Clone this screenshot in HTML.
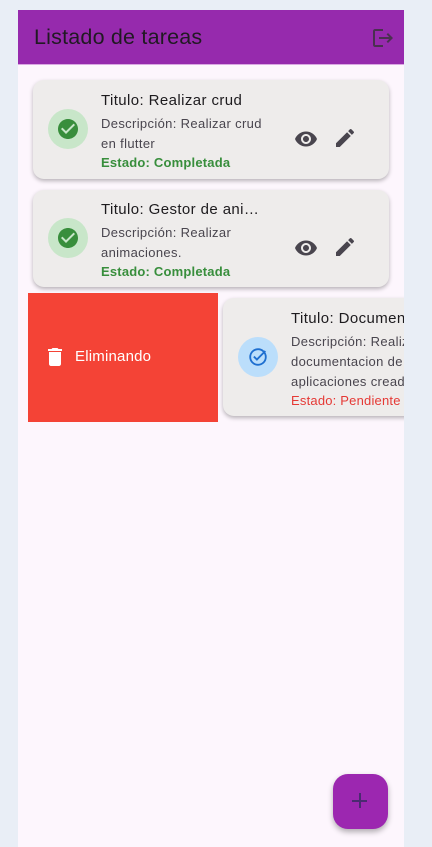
<!DOCTYPE html>
<html><head><meta charset="utf-8"><style>
*{margin:0;padding:0;box-sizing:border-box}
body{width:432px;height:847px;background:#e9eef6;position:relative;overflow:hidden;font-family:"Liberation Sans",Roboto,sans-serif}
.app{position:absolute;left:18px;top:10px;width:386px;height:837px;background:#fdf6fd;overflow:hidden}
.bar{position:absolute;left:0;top:0;width:386px;height:55px;background:#962aad;border-bottom:1px solid #d9a7e2}
.bar h1{position:absolute;left:16px;top:15px;font-size:21.5px;font-weight:400;color:#201a22;letter-spacing:.2px}
.abs{position:absolute}
.card{position:absolute;background:#eeeceb;border-radius:11px;box-shadow:0 2px 4px rgba(0,0,0,.28)}
.av{position:absolute;width:40px;height:40px;border-radius:50%}
.t{position:absolute;font-size:15px;color:#1d1b1e;white-space:nowrap;letter-spacing:.4px}
.d{position:absolute;font-size:13px;color:#49454e;line-height:20px;white-space:nowrap;letter-spacing:.35px}
.s{position:absolute;font-size:13px;font-weight:bold;color:#388e3c;white-space:nowrap;letter-spacing:.2px}
</style></head><body>
<div class="app">
<div class="bar"><h1>Listado de tareas</h1>
<svg class="abs" style="left:353px;top:16px" width="24" height="24" viewBox="0 0 24 24"><path fill="#4a3050" d="M17 7l-1.41 1.41L18.170 11H8v2h10.17l-2.58 2.58L17 17l5-5zM4 5h8V3H4c-1.1 0-2 .9-2 2v14c0 1.1.9 2 2 2h8v-2H4V5z"/></svg></div>

<div class="card" style="left:15px;top:70px;width:356px;height:99px">
<div class="av" style="left:15px;top:29px;background:#c8e6c9"><svg class="abs" style="left:8px;top:8px" width="24" height="24" viewBox="0 0 24 24"><path fill="#388e3c" d="M12 2C6.48 2 2 6.48 2 12s4.48 10 10 10 10-4.48 10-10S17.52 2 12 2zm-2 15l-5-5 1.41-1.41L10 14.17l7.59-7.59L19 8l-9 9z"/></svg></div>
<div class="t" style="left:68px;top:12px">Titulo: Realizar crud</div>
<div class="d" style="left:68px;top:34px">Descripción: Realizar crud<br>en flutter</div>
<div class="s" style="left:68px;top:75px">Estado: Completada</div>
<svg class="abs" style="left:261px;top:47px" width="24" height="24" viewBox="0 0 24 24"><path fill="#49454e" d="M12 4.5C7 4.5 2.73 7.61 1 12c1.73 4.39 6 7.5 11 7.5s9.27-3.11 11-7.5c-1.73-4.39-6-7.5-11-7.5zM12 17c-2.76 0-5-2.24-5-5s2.24-5 5-5 5 2.24 5 5-2.24 5-5 5zm0-8c-1.66 0-3 1.34-3 3s1.34 3 3 3 3-1.34 3-3-1.34-3-3-3z"/></svg>
<svg class="abs" style="left:300px;top:46px" width="24" height="24" viewBox="0 0 24 24"><path fill="#49454e" d="M3 17.25V21h3.75L17.81 9.94l-3.75-3.75L3 17.25zM20.71 7.04c.39-.39.39-1.02 0-1.41l-2.34-2.34c-.39-.39-1.02-.39-1.41 0l-1.83 1.83 3.75 3.75 1.83-1.83z"/></svg>
</div>

<div class="card" style="left:15px;top:180px;width:356px;height:97px">
<div class="av" style="left:15px;top:28px;background:#c8e6c9"><svg class="abs" style="left:8px;top:8px" width="24" height="24" viewBox="0 0 24 24"><path fill="#388e3c" d="M12 2C6.48 2 2 6.48 2 12s4.48 10 10 10 10-4.48 10-10S17.52 2 12 2zm-2 15l-5-5 1.41-1.41L10 14.17l7.59-7.59L19 8l-9 9z"/></svg></div>
<div class="t" style="left:68px;top:11px">Titulo: Gestor de ani…</div>
<div class="d" style="left:68px;top:33px">Descripción: Realizar<br>animaciones.</div>
<div class="s" style="left:68px;top:74px">Estado: Completada</div>
<svg class="abs" style="left:261px;top:46px" width="24" height="24" viewBox="0 0 24 24"><path fill="#49454e" d="M12 4.5C7 4.5 2.73 7.61 1 12c1.73 4.39 6 7.5 11 7.5s9.27-3.11 11-7.5c-1.73-4.39-6-7.5-11-7.5zM12 17c-2.76 0-5-2.24-5-5s2.24-5 5-5 5 2.24 5 5-2.24 5-5 5zm0-8c-1.66 0-3 1.34-3 3s1.34 3 3 3 3-1.34 3-3-1.34-3-3-3z"/></svg>
<svg class="abs" style="left:300px;top:45px" width="24" height="24" viewBox="0 0 24 24"><path fill="#49454e" d="M3 17.25V21h3.75L17.81 9.94l-3.75-3.75L3 17.25zM20.71 7.04c.39-.39.39-1.02 0-1.41l-2.34-2.34c-.39-.39-1.02-.39-1.41 0l-1.83 1.83 3.75 3.75 1.83-1.83z"/></svg>
</div>

<div class="abs" style="left:10px;top:283px;width:190px;height:129px;background:#f44336">
<svg class="abs" style="left:15px;top:52px" width="24" height="24" viewBox="0 0 24 24"><path fill="#fff" d="M6 19c0 1.1.9 2 2 2h8c1.1 0 2-.9 2-2V7H6v12zM19 4h-3.5l-1-1h-5l-1 1H5v2h14V4z"/></svg>
<div class="abs" style="left:47px;top:55px;font-size:15px;color:#fff;letter-spacing:.2px">Eliminando</div>
</div>

<div class="card" style="left:205px;top:288px;width:220px;height:118px">
<div class="av" style="left:15px;top:39px;background:#bbdefb"><svg class="abs" style="left:9px;top:9px" width="22" height="22" viewBox="0 0 24 24"><circle cx="12" cy="12" r="8.5" fill="none" stroke="#1e6fd0" stroke-width="2"/><path d="M7.5 11.5l3.3 3.3L20 5.5" fill="none" stroke="#1e6fd0" stroke-width="2"/></svg></div>
<div class="t" style="left:68px;top:12px">Titulo: Documentar</div>
<div class="d" style="left:68px;top:34px">Descripción: Realizar<br>documentacion de<br>aplicaciones creadas</div>
<div class="s" style="left:68px;top:95px;color:#e53935;font-weight:400">Estado: Pendiente</div>
</div>

<div class="abs" style="left:315px;top:764px;width:55px;height:55px;border-radius:15px;background:#9c27b0;box-shadow:0 3px 6px rgba(0,0,0,.3)">
<div class="abs" style="left:19px;top:26px;width:15px;height:2px;background:#4a2a70"></div>
<div class="abs" style="left:26px;top:19px;width:2px;height:15px;background:#4a2a70"></div>
</div>
</div>
</body></html>
